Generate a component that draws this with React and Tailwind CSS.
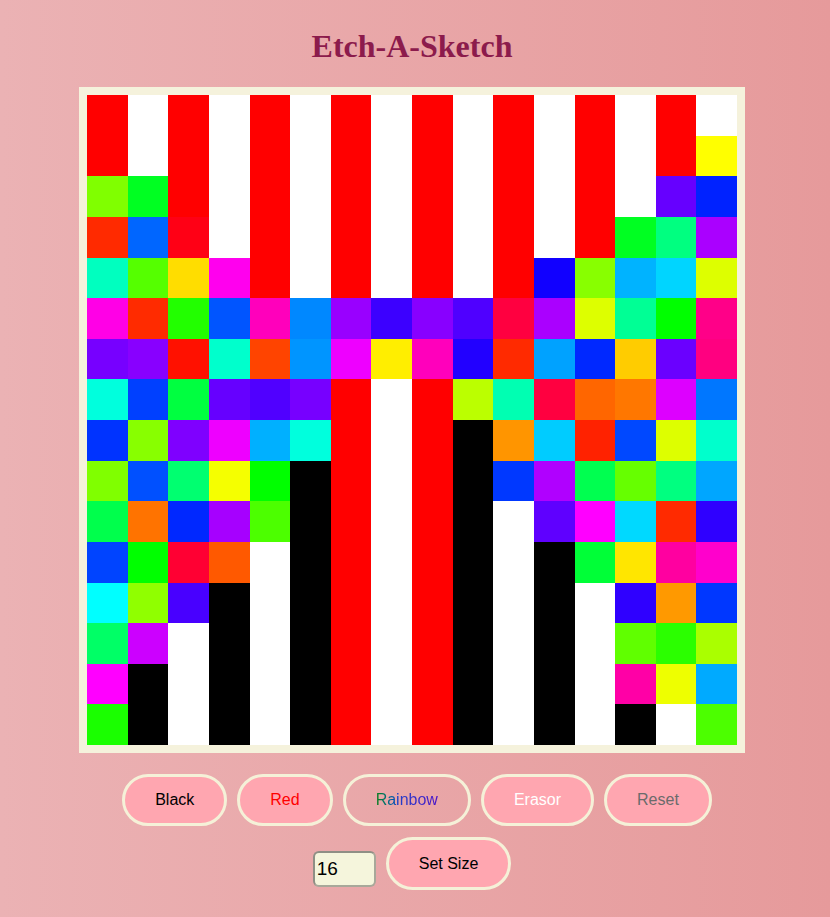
const W = "#ffffff";
const R = "#ff0000";
const K = "#000000";

// colours of the sketch pad, row by row
const rows = [
    [R, W, R, W, R, W, R, W, R, W, R, W, R, W, R, W],
    [R, W, R, W, R, W, R, W, R, W, R, W, R, W, R, "#ffff00"],
    ["#80ff00", "#00ff22", R, W, R, W, R, W, R, W, R, W, R, W, "#6600ff", "#0022ff"],
    ["#ff2a00", "#0066ff", "#ff0015", W, R, W, R, W, R, W, R, W, R, "#00ff22", "#00ff80", "#aa00ff"],
    ["#00ffbf", "#55ff00", "#ffdd00", "#ff00ee", R, W, R, W, R, W, R, "#1100ff", "#88ff00", "#00b3ff", "#00d5ff", "#ddff00"],
    ["#ff00e6", "#ff2b00", "#22ff00", "#0055ff", "#ff00bb", "#0088ff", "#9900ff", "#3c00ff", "#8800ff", "#4f00ff", "#ff0040", "#aa00ff", "#ddff00", "#00ff95", "#00ff00", "#ff0088"],
    ["#7700ff", "#8800ff", "#ff1100", "#00ffcc", "#ff4400", "#0095ff", "#ee00ff", "#ffee00", "#ff00bb", "#2200ff", "#ff2a00", "#00a2ff", "#0028ff", "#ffcc00", "#6a00ff", "#ff0080"],
    ["#00ffdd", "#0040ff", "#00ff40", "#6600ff", "#5000ff", "#7700ff", R, W, R, "#bbff00", "#00ffb2", "#ff0040", "#ff6600", "#ff7700", "#dd00ff", "#0077ff"],
    ["#0033ff", "#88ff00", "#7f00ff", "#ee00ff", "#00b0ff", "#00ffdd", R, W, R, K, "#ff9500", "#00ccff", "#ff2200", "#0048ff", "#ddff00", "#00ffcc"],
    ["#80ff00", "#0050ff", "#00ff70", "#f5ff00", "#00ff00", K, R, W, R, K, "#0038ff", "#b000ff", "#00ff50", "#66ff00", "#00ff80", "#00a6ff"],
    ["#00ff4c", "#ff7300", "#0028ff", "#a600ff", "#4cff00", K, R, W, R, K, W, "#5f00ff", "#ff00ff", "#00d9ff", "#ff2a00", "#2f00ff"],
    ["#0044ff", "#00ff00", "#ff0033", "#ff5900", W, K, R, W, R, K, W, K, "#00ff37", "#ffe600", "#ff00a0", "#ff00cc"],
    ["#00ffff", "#90ff00", "#4800ff", K, W, K, R, W, R, K, W, K, W, "#2f00ff", "#ff9900", "#0037ff"],
    ["#00ff66", "#cc00ff", W, K, W, K, R, W, R, K, W, K, W, "#60ff00", "#2bff00", "#aaff00"],
    ["#ff00ff", K, W, K, W, K, R, W, R, K, W, K, W, "#ff00a6", "#eeff00", "#00aaff"],
    ["#1aff00", K, W, K, W, K, R, W, R, K, W, K, W, K, W, "#4cff00"],
];

const btn =
    "h-[52px] px-[30px] rounded-full border-[3px] border-[#f5f1d8] text-[16px] leading-none";

function App() {
    return (
        <div className="min-h-screen w-full bg-gradient-to-r from-[#ebb2b4] to-[#e69a9b] flex flex-col items-center pt-[26px] font-['Liberation_Sans',Arial,sans-serif]">
            <h1 className="mr-[6px] text-[32px] leading-[40px] font-bold text-[#8c1b4c] font-['Liberation_Serif','Times_New_Roman',serif]">
                Etch-A-Sketch
            </h1>

            {/* sketch pad */}
            <div className="mt-[21px] mr-[6px] p-[8px] bg-[#f5f2dc]">
                <div className="grid grid-cols-16 w-[650px] h-[650px]">
                    {rows.flat().map((c, i) => (
                        <div key={i} style={{ backgroundColor: c }} />
                    ))}
                </div>
            </div>

            {/* colour buttons */}
            <div className="flex gap-[10px] mt-[21px] ml-[4px]">
                <button className={`${btn} bg-[#ffa6b0] text-black`}>Black</button>
                <button className={`${btn} bg-[#ffa6b0] text-[#ff0000]`}>Red</button>
                <button className={`${btn} bg-transparent`}>
                    <span className="bg-gradient-to-r from-[#0b7d2a] from-5% via-[#1e3fc8] via-35% to-[#4a10c8] bg-clip-text text-transparent">
                        Rainbow
                    </span>
                </button>
                <button className={`${btn} bg-[#ffa6b0] text-white`}>Erasor</button>
                <button className={`${btn} bg-[#ffa6b0] text-[#6b6b6b]`}>Reset</button>
            </div>

            {/* grid size */}
            <div className="flex items-end gap-[10px] mt-[11px] mr-[6px]">
                <input
                    type="text"
                    defaultValue="16"
                    className="w-[63px] h-[36px] mb-[3px] pl-[2px] bg-[#f5f5dc] border-2 border-[#a8a89a] border-t-[#8f8f85] border-l-[#8f8f85] rounded-[6px] text-[19px] text-black outline-none"
                />
                <button className={`${btn} h-[53px] px-[30px] bg-[#ffa6b0] text-black`}>Set Size</button>
            </div>
        </div>
    );
}

export default App;
